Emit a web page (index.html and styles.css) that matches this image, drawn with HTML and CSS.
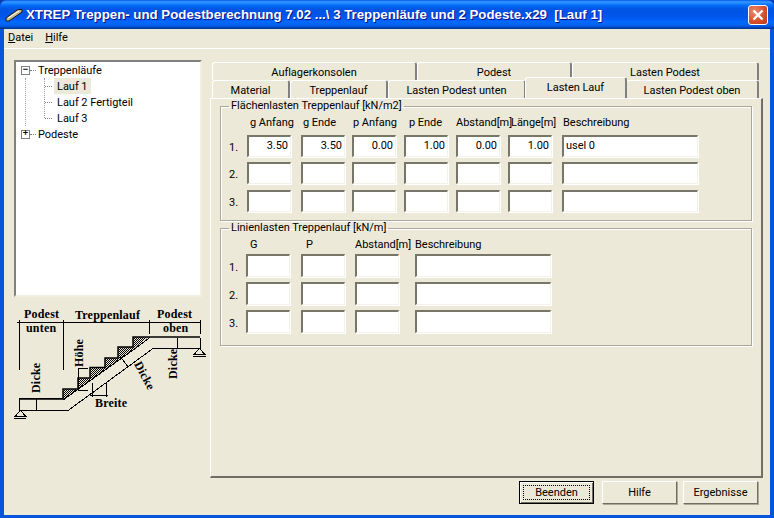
FILE: index.html
```html
<!DOCTYPE html>
<html lang="de">
<head>
<meta charset="utf-8">
<title>XTREP</title>
<link rel="stylesheet" href="styles.css">
</head>
<body>
<div class="window">
  <header class="titlebar">
    <svg class="appicon" width="18" height="14" viewBox="0 0 18 14">
      <path d="M1 13 L1 10 L13 1.5 L17 1.5 L17 4 L4 13 Z" fill="#c9b98f" stroke="#1a1a1a" stroke-width="1"/>
      <path d="M3 10 L14 3" stroke="#fff" stroke-width="1"/>
    </svg>
    <span class="titletext">XTREP Treppen- und Podestberechnung 7.02 ...\ 3 Treppenläufe und 2 Podeste.x29&nbsp; [Lauf 1]</span>
    <span class="close"><svg width="12" height="12" viewBox="0 0 12 12"><path d="M1.5 1.5 L10.5 10.5 M10.5 1.5 L1.5 10.5" stroke="#fff" stroke-width="2.4"/></svg></span>
  </header>
  <nav class="menubar"><span class="menuitem"><u>D</u>atei</span><span class="menuitem"><u>H</u>ilfe</span></nav>
  <main class="client">
    <div class="columns">
      <aside class="leftcol">
        <div class="tree">
          <div class="node"><span class="expander">−</span><span class="hline"></span><span class="nodelabel">Treppenläufe</span></div>
          <div class="children">
            <div class="sub">
              <div class="leaf"><span class="leafline"></span><span class="nodelabel selected">Lauf 1</span></div>
              <div class="leaf"><span class="leafline"></span><span class="nodelabel">Lauf 2 Fertigteil</span></div>
              <div class="leaf"><span class="leafline"></span><span class="nodelabel">Lauf 3</span></div>
            </div>
          </div>
          <div class="node"><span class="expander">+</span><span class="hline"></span><span class="nodelabel">Podeste</span></div>
        </div>
        <svg class="diagram" width="196" height="120" viewBox="14 305 196 120">
          <defs>
            <pattern id="dots" width="2" height="2" patternUnits="userSpaceOnUse">
              <rect width="1" height="1" fill="#000"/><rect x="1" y="1" width="1" height="1" fill="#000"/>
            </pattern>
          </defs>
          <path class="stipple" d="M63 389H78L63 400Z M78 378H90V380.5L78 389Z M90 367.5H105V369.7L90 380.5Z M105 358H118V360.3L105 369.7Z M118 347H133V349.5L118 360.3Z M133 337H148L133 349.5Z"/>
          <g class="thin">
            <path d="M17 322.5H200.5M19.5 320V370M63.5 320V370M149.5 320V334M200.5 320V334"/>
            <path d="M200.5 337.5V348.5H153L68 410.5H19.5V398.5H63"/>
            <path d="M63 400L133 350L150 337.5"/>
            <path d="M36.5 398V411M177.5 338V349M78.5 368V390H88M78.5 368.5H88M92.5 383V397M106.5 383V397M90 395.5H108M120 356L128 367"/>
            <path d="M20.5 410.5L15 416.5H26Z M14 418.5H26M199.5 348.5L194 354.5H205Z M193 356.5H206"/>
          </g>
          <path class="thick" d="M19 399H63V389H78V378H90V367.5H105V358H118V347H133V337H200"/>
          <g class="dtext">
            <text x="24" y="318">Podest</text>
            <text x="26" y="332">unten</text>
            <text x="75" y="319">Treppenlauf</text>
            <text x="157" y="318">Podest</text>
            <text x="163" y="332">oben</text>
            <text x="95" y="407">Breite</text>
            <text transform="translate(40 393) rotate(-90)">Dicke</text>
            <text transform="translate(83 367) rotate(-90)">Höhe</text>
            <text transform="translate(177 379) rotate(-90)">Dicke</text>
            <text transform="translate(134 364) rotate(62)">Dicke</text>
          </g>
        </svg>
      </aside>
      <section class="tabs">
        <div class="tabrow row-a">
          <span class="tab">Auflagerkonsolen</span>
          <span class="tab">Podest</span>
          <span class="tab">Lasten Podest</span>
        </div>
        <div class="tabrow row-b">
          <span class="tab">Material</span>
          <span class="tab">Treppenlauf</span>
          <span class="tab">Lasten Podest unten</span>
          <span class="tab active">Lasten Lauf</span>
          <span class="tab">Lasten Podest oben</span>
        </div>
        <div class="panel">
          <fieldset class="group group-a">
            <legend>Flächenlasten Treppenlauf [kN/m2]</legend>
            <div class="grid grid-a">
              <span></span>
              <span class="head">g Anfang</span><span class="head">g Ende</span><span class="head">p Anfang</span><span class="head">p Ende</span><span class="head">Abstand[m]</span><span class="head">Länge[m]</span><span class="head">Beschreibung</span>
              <span class="num">1.</span>
              <span class="field right">3.50</span><span class="field right">3.50</span><span class="field right">0.00</span><span class="field right">1.00</span><span class="field right">0.00</span><span class="field right">1.00</span><span class="field wide">usel 0</span>
              <span class="num">2.</span>
              <span class="field"></span><span class="field"></span><span class="field"></span><span class="field"></span><span class="field"></span><span class="field"></span><span class="field wide"></span>
              <span class="num">3.</span>
              <span class="field"></span><span class="field"></span><span class="field"></span><span class="field"></span><span class="field"></span><span class="field"></span><span class="field wide"></span>
            </div>
          </fieldset>
          <fieldset class="group group-b">
            <legend>Linienlasten Treppenlauf [kN/m]</legend>
            <div class="grid grid-b">
              <span></span>
              <span class="head">G</span><span class="head">P</span><span class="head">Abstand[m]</span><span class="head">Beschreibung</span>
              <span class="num">1.</span>
              <span class="field"></span><span class="field"></span><span class="field"></span><span class="field wide"></span>
              <span class="num">2.</span>
              <span class="field"></span><span class="field"></span><span class="field"></span><span class="field wide"></span>
              <span class="num">3.</span>
              <span class="field"></span><span class="field"></span><span class="field"></span><span class="field wide"></span>
            </div>
          </fieldset>
        </div>
      </section>
    </div>
    <footer class="buttons">
      <button class="btn default"><span class="focus">Beenden</span></button>
      <button class="btn gap-l">Hilfe</button>
      <button class="btn">Ergebnisse</button>
    </footer>
  </main>
</div>
</body>
</html>
```
FILE: styles.css
```css
* { box-sizing: border-box; }
html, body { margin: 0; padding: 0; }
body { width: 774px; height: 518px; overflow: hidden; background: #0a3bb0; font: 11px Roboto, "Liberation Sans", Arial, sans-serif; letter-spacing: -0.03px; color: #000; }
.window { width: 774px; height: 518px; display: flex; flex-direction: column; background: #0855dd; border-radius: 7px 7px 0 0; overflow: hidden; }
.titlebar { flex: 0 0 29px; display: flex; align-items: center; padding: 0 6px 0 5px;
  background: linear-gradient(180deg, #0058ee 0%, #3593ff 6%, #288eff 10%, #127dff 14%, #036ffc 18%, #0262ee 24%, #0057e5 30%, #0054e3 40%, #0055eb 56%, #005bf5 66%, #026afe 76%, #0062ef 86%, #0052d6 92%, #0040ab 96%, #003092 100%); }
.appicon { flex: none; margin-right: 3px; }
.titletext { flex: 1; color: #fff; font: bold 13.27px "Liberation Sans", Arial, sans-serif; letter-spacing: 0; white-space: pre; text-shadow: 1px 1px 0 #0f1089; }
.close { flex: none; width: 20px; height: 20px; display: flex; align-items: center; justify-content: center; border: 1px solid #fff; border-radius: 3px; background: radial-gradient(circle at 30% 30%, #e98a6c, #d9512c 55%, #b8371a); }
.menubar { flex: 0 0 20px; margin: 0 4px; padding: 0 0 2px 4px; display: flex; align-items: center; gap: 12px; background: #ece9d8; border-bottom: 1px solid #fff; }
.menuitem u { text-decoration: underline; }
.client { flex: 1; margin: 0 4px 3px; background: #ece9d8; display: flex; flex-direction: column; min-height: 0; }
.columns { flex: 0 0 429px; display: flex; padding-left: 10px; }
.leftcol { flex: 0 0 196px; padding-top: 11px; display: flex; flex-direction: column; }
.tree { width: 188px; height: 237px; background: #fff; border: 2px solid; border-color: #808080 #f1efe2 #f1efe2 #808080; padding: 0 0 0 5px; }
.node { height: 16px; display: flex; align-items: center; }
.expander { width: 9px; height: 9px; border: 1px solid #808080; background: #fff; font: bold 9px/7px "Liberation Mono", monospace; text-align: center; flex: none; }
.hline { width: 6px; border-top: 1px dotted #808080; }
.nodelabel { padding: 2px 3px 0 2px; line-height: 14px; height: 16px; white-space: nowrap; }
.children { margin-left: 4px; border-left: 1px dotted #a0a0a0; height: 48px; }
.sub { margin-left: 18px; height: 40px; border-left: 1px dotted #a0a0a0; }
.leaf { height: 16px; display: flex; align-items: center; }
.leafline { width: 7px; border-top: 1px dotted #808080; flex: none; margin-right: 2px; }
.leaf .nodelabel { padding-left: 3px; }
.selected { background: #ece9d8; }
.diagram { display: block; margin-top: 8px; }
.stipple { fill: url(#dots); }
.thin { fill: none; stroke: #000; stroke-width: 1; shape-rendering: crispEdges; }
.thick { fill: none; stroke: #000; stroke-width: 1.5; }
.dtext text { font: bold 12px "Liberation Serif", serif; fill: #000; letter-spacing: 0.2px; }
.tabs { flex: 0 0 552px; padding-top: 13px; display: flex; flex-direction: column; }
.tabrow { display: grid; height: 18px; margin-left: 2px; }
.row-a { grid-template-columns: 205px 155px 187px; }
.row-b { grid-template-columns: 78px 98px 138px 100px 133px; }
.tab { height: 18px; line-height: 19px; text-align: center; background: #ece9d8; border-top: 1px solid #fff; border-left: 1px solid #fff; border-right: 2px solid #808080; border-radius: 3px 3px 0 0; white-space: nowrap; overflow: hidden; }
.tab.active { height: 21px; margin-top: -3px; margin-left: -1px; margin-right: -1px; position: relative; z-index: 1; }
.panel { height: 380px; background: #ece9d8; border: 1px solid; border-color: #fff #716f64 #716f64 #fff; border-width: 1px 2px 2px 1px; padding: 0 9px; }
.group { margin: 0; padding: 0; border: 1px solid #aca899; box-shadow: inset 1px 1px 0 #fff, 1px 1px 0 #fff; width: 532px; min-width: 0; }
.group legend { margin-left: 8px; padding: 0 2px; line-height: 14px; }
.group-a { height: 122px; }
.group-b { height: 125px; }
.grid { display: grid; }
.grid-a { margin-left: 6px; grid-template-columns: 20px 54px 51px 52px 52px 52px 54px 136px; grid-template-rows: 20px 27px 28px 28px; margin-top: 2px; }
.grid-b { margin-left: 5px; grid-template-columns: 20px 55px 54px 60px 136px; grid-template-rows: 17px 28px 28px 28px; margin-top: 2px; }
.head { white-space: nowrap; line-height: 14px; padding-top: 1px; }
.num { line-height: 26px; padding-left: 2px; }
.grid-b .num { line-height: 28px; padding-left: 3px; }
.field { width: 44px; height: 23px; background: #fff; border: 2px solid; border-color: #787669 #f4f2e8 #f4f2e8 #787669; border-width: 2px 1px 1px 2px; box-shadow: 1px 1px 0 #fff; padding: 1px 2px; line-height: 16px; overflow: hidden; white-space: nowrap; }
.grid-a .field { height: 22px; }
.field.right { text-align: right; }
.field.wide { width: 136px; padding-left: 2px; }
.grid-a .head:nth-child(2) { padding-left: 3px; }
.grid-a .head:nth-child(3) { padding-left: 2px; }
.grid-a .head:nth-child(4) { padding-left: 1px; }
.grid-a .head:nth-child(5) { padding-left: 5px; }
.grid-a .head:nth-child(7) { padding-left: 3px; }
.grid-a .head:nth-child(8) { padding-left: 1px; }
.grid-b .head:nth-child(2) { padding-left: 4px; }
.grid-b .head:nth-child(3) { padding-left: 5px; }
.buttons { flex: 1; display: flex; justify-content: flex-end; gap: 6px; padding: 3px 12px 0 0; align-items: flex-start; }
.btn { width: 75px; height: 23px; padding: 0; background: #ece9d8; color: #000; font: inherit; border: 1px solid; border-color: #fff #716f64 #716f64 #fff; box-shadow: 1px 1px 0 #aca899; }
.btn.default { border: 1px solid #000; box-shadow: inset 1px 1px 0 #fff, inset -1px -1px 0 #716f64; padding: 3px; margin-right: 2px; }
.focus { display: block; height: 15px; line-height: 13px; border: 1px dotted #000; }
```
